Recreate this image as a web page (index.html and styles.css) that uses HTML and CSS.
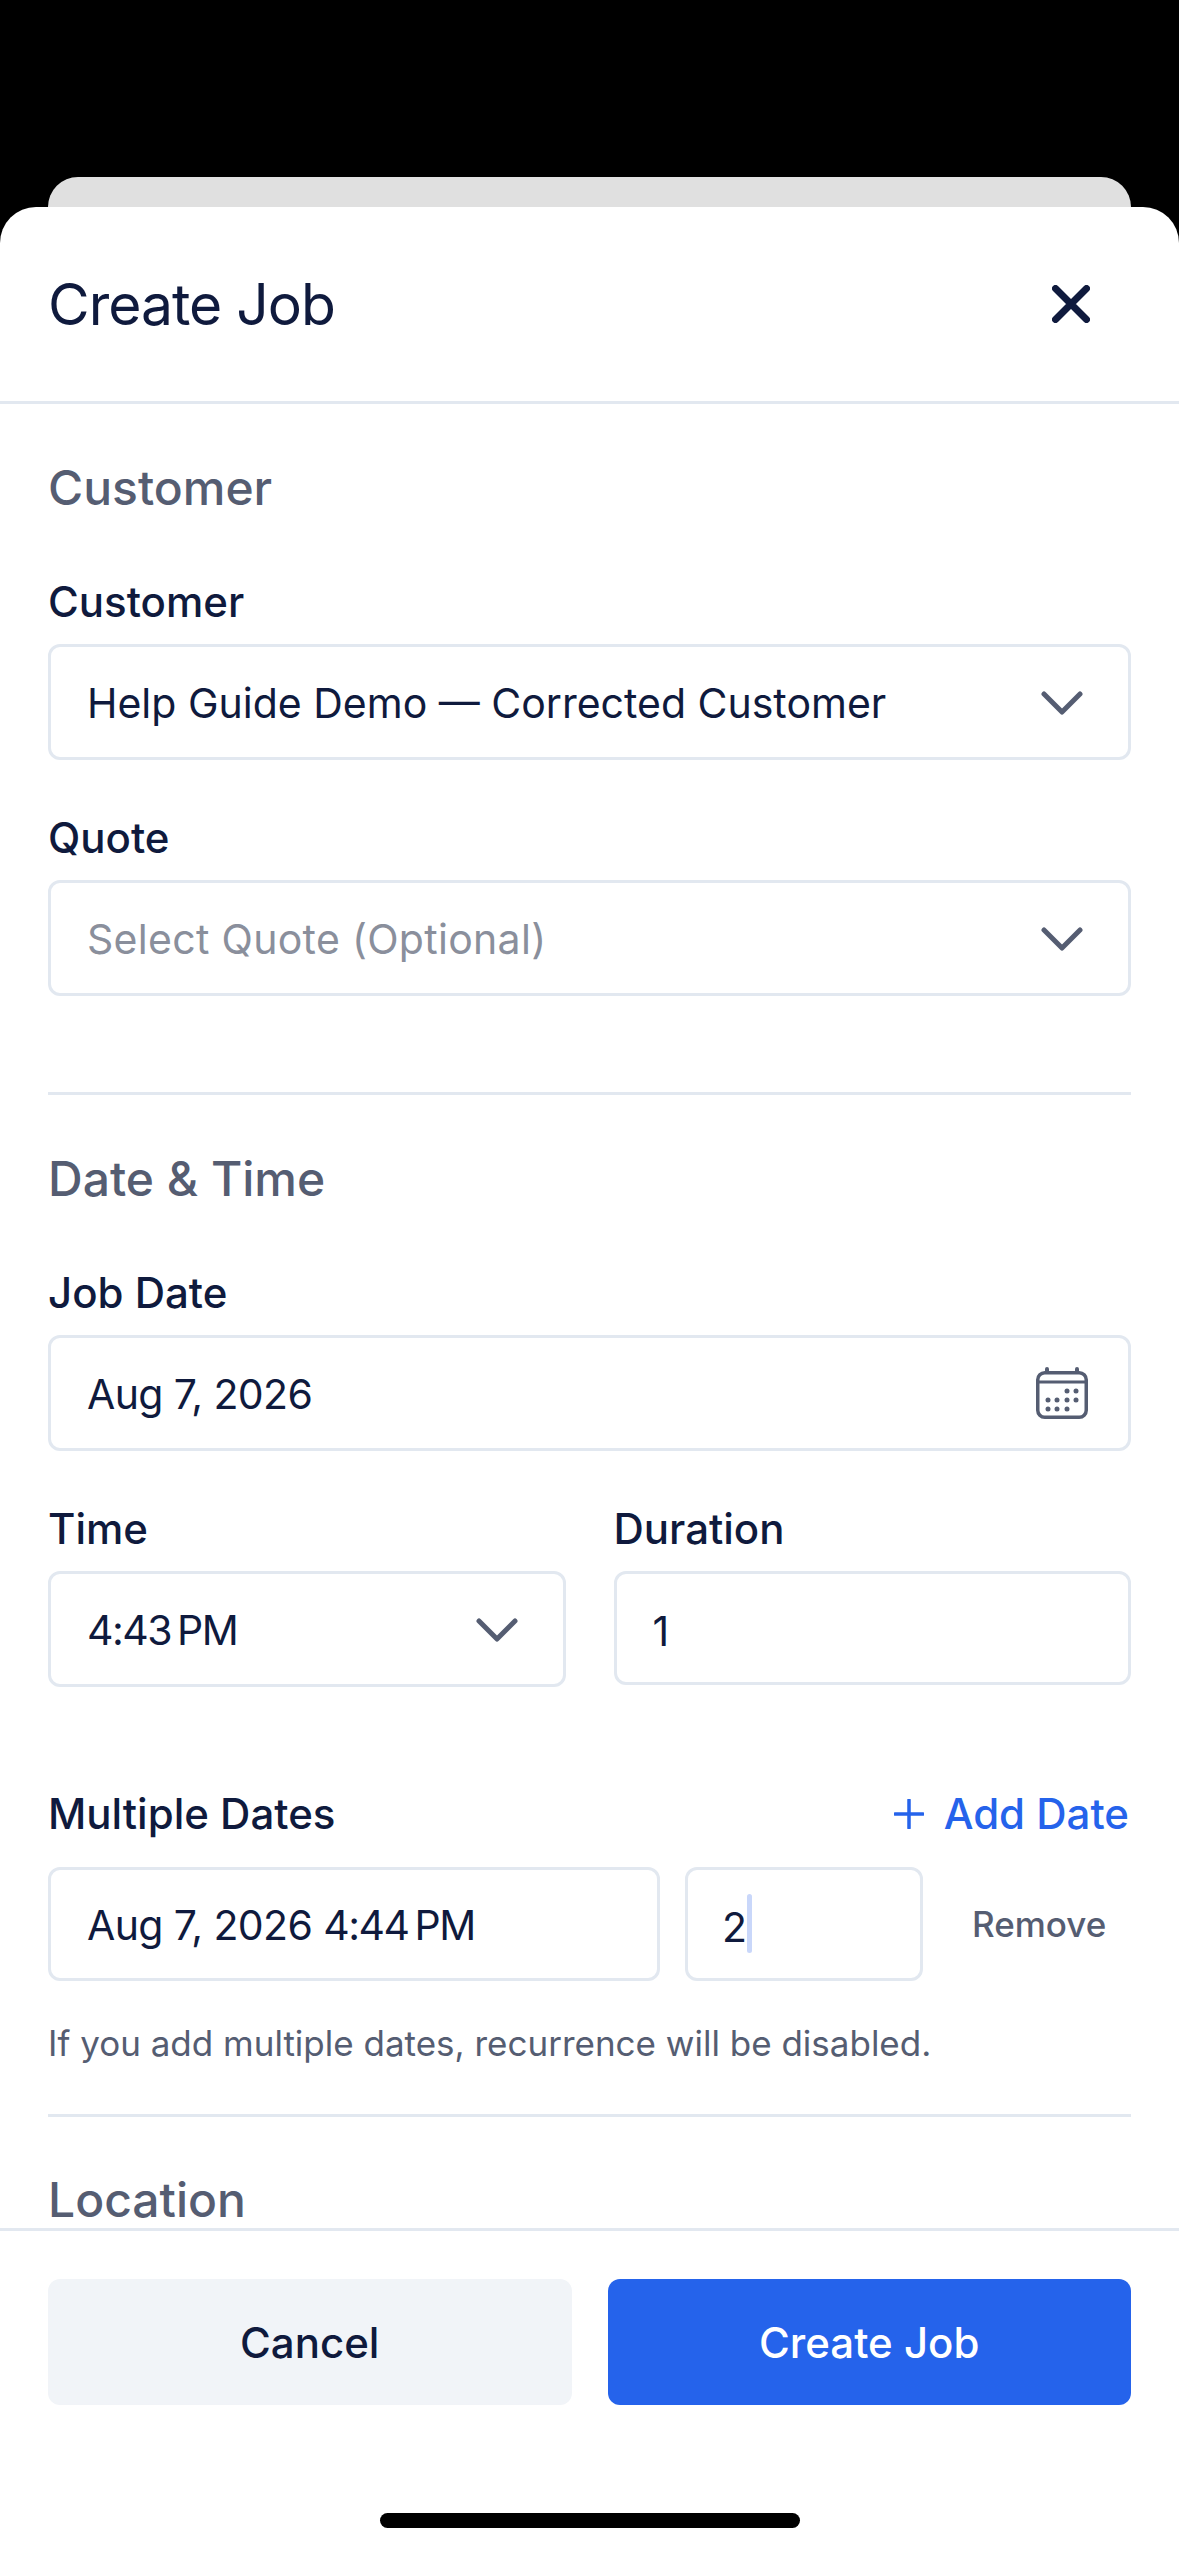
FILE: index.html
```html
<!DOCTYPE html>
<html lang="en">
<head>
    <meta charset="UTF-8">
    <meta name="viewport" content="width=device-width, initial-scale=1.0">
    <title>Create Job</title>
    <link rel="stylesheet" href="styles.css">
</head>
<body>
    <div class="back-card"></div>
    <div class="sheet">
        <div class="sheet-header">
            <h1>Create Job</h1>
            <svg class="close-icon" width="38" height="38" viewBox="0 0 38 38"><path d="M3.5 3.5L34.5 34.5M34.5 3.5L3.5 34.5" fill="none" stroke="#0f1a3d" stroke-width="7" stroke-linecap="round"/></svg>
        </div>

        <div class="sheet-body">
            <section class="section">
                <h2>Customer</h2>
                <div class="field">
                    <label>Customer</label>
                    <div class="input select">
                        <span>Help Guide Demo — Corrected Customer</span>
                        <svg class="chevron" width="42" height="24" viewBox="0 0 42 24"><path d="M3 3L21 21L39 3" fill="none" stroke="#555d72" stroke-width="5" stroke-linecap="round" stroke-linejoin="round"/></svg>
                    </div>
                </div>
                <div class="field">
                    <label>Quote</label>
                    <div class="input select">
                        <span class="placeholder">Select Quote (Optional)</span>
                        <svg class="chevron" width="42" height="24" viewBox="0 0 42 24"><path d="M3 3L21 21L39 3" fill="none" stroke="#555d72" stroke-width="5" stroke-linecap="round" stroke-linejoin="round"/></svg>
                    </div>
                </div>
            </section>

            <section class="section">
                <h2>Date &amp; Time</h2>
                <div class="field">
                    <label>Job Date</label>
                    <div class="input select">
                        <span class="date-value">Aug 7, 2026</span>
                        <svg class="calendar" width="54" height="54" viewBox="0 0 54 54">
                            <rect x="2.75" y="5.75" width="48.5" height="44.5" rx="7" fill="none" stroke="#555d72" stroke-width="3.5"/>
                            <path d="M2 15H52" stroke="#555d72" stroke-width="3"/>
                            <path d="M12 2V5M42 2V5" stroke="#555d72" stroke-width="4" stroke-linecap="round"/>
                            <g fill="#555d72">
                                <circle cx="32" cy="24" r="2.5"/><circle cx="41" cy="24" r="2.5"/>
                                <circle cx="13" cy="33" r="2.5"/><circle cx="22" cy="33" r="2.5"/><circle cx="32" cy="33" r="2.5"/><circle cx="41" cy="33" r="2.5"/>
                                <circle cx="13" cy="42" r="2.5"/><circle cx="22" cy="42" r="2.5"/><circle cx="32" cy="42" r="2.5"/>
                            </g>
                        </svg>
                    </div>
                </div>
                <div class="field-row">
                    <div class="field">
                        <label>Time</label>
                        <div class="input select">
                            <span class="time-value">4:43&#8239;PM</span>
                            <svg class="chevron" width="42" height="24" viewBox="0 0 42 24"><path d="M3 3L21 21L39 3" fill="none" stroke="#555d72" stroke-width="5" stroke-linecap="round" stroke-linejoin="round"/></svg>
                        </div>
                    </div>
                    <div class="field">
                        <label>Duration</label>
                        <div class="input number"><span>1</span></div>
                    </div>
                </div>

                <div class="dates-head">
                    <label>Multiple Dates</label>
                    <div class="add-date">
                        <svg width="30" height="30" viewBox="0 0 30 30"><path d="M15 1V29M1 15H29" stroke="#2563eb" stroke-width="3.5" stroke-linecap="round"/></svg>
                        <span>Add Date</span>
                    </div>
                </div>
                <div class="dates-row">
                    <div class="input date-input"><span class="date-value">Aug 7, 2026 <span class="time-value">4:44&#8239;PM</span></span></div>
                    <div class="input number hours-input"><span>2</span><i class="caret"></i></div>
                    <span class="remove">Remove</span>
                </div>
                <p class="hint">If you add multiple dates, recurrence will be disabled.</p>
            </section>

            <section class="section">
                <h2>Location</h2>
            </section>
        </div>

        <div class="sheet-footer">
            <div class="btn btn-cancel">Cancel</div>
            <div class="btn btn-primary">Create Job</div>
        </div>
        <div class="home-bar"><div></div></div>
    </div>
</body>
</html>
```

FILE: styles.css
```css
* {
    box-sizing: border-box;
}

html, body {
    margin: 0;
    padding: 0;
}

body {
    width: 1179px;
    height: 2556px;
    padding-top: 177px;
    background: #000;
    font-family: "Inter", "Liberation Sans", sans-serif;
    color: #0f1a3d;
    overflow: hidden;
    display: flex;
    flex-direction: column;
}

.back-card {
    height: 30px;
    flex-shrink: 0;
    margin: 0 48px;
    background: #e0e0e0;
    border-radius: 30px 30px 0 0;
}

.sheet {
    flex: 1;
    min-height: 0;
    display: flex;
    flex-direction: column;
    background: #fff;
    border-radius: 36px 36px 0 0;
}

.sheet-header {
    height: 197px;
    flex-shrink: 0;
    display: flex;
    align-items: center;
    justify-content: space-between;
    padding: 0 48px;
    border-bottom: 3px solid #e2e8f0;
}

.sheet-header h1 {
    margin: 0;
    font-size: 57px;
    font-weight: 400;
    letter-spacing: -1px;
}

.close-icon {
    margin-right: 41px;
}

.sheet-body {
    flex: 1;
    min-height: 0;
    overflow: hidden;
    padding: 0 48px;
}

.section {
    padding: 57px 0 42px;
    border-bottom: 3px solid #e2e8f0;
}

.section:last-child {
    padding: 58px 0 0;
    border-bottom: none;
}

.section:last-child h2 {
    margin: 0;
    line-height: 50px;
}

.section h2 {
    margin: 0 0 63px;
    font-size: 48px;
    line-height: 54px;
    font-weight: 500;
    color: #555d72;
}

.field {
    margin-bottom: 54px;
    flex: 1;
    min-width: 0;
}

label {
    display: block;
    font-size: 42px;
    line-height: 48px;
    font-weight: 500;
    margin-bottom: 18px;
}

.input {
    height: 114px;
    display: flex;
    align-items: center;
    justify-content: space-between;
    padding: 1px 36px 0;
    border: 3px solid #e2e8f0;
    border-radius: 12px;
    font-size: 41px;
    background: #fff;
}

.select {
    height: 116px;
}

.number {
    padding-top: 5px;
}

.date-value {
    letter-spacing: -0.6px;
}

.time-value {
    letter-spacing: -1.5px;
}

.placeholder {
    color: #8a8f9c;
    letter-spacing: 0.3px;
}

.chevron {
    margin-right: 9px;
}

.calendar {
    margin-right: 3px;
}

.field-row {
    display: flex;
    gap: 48px;
}

.dates-head {
    display: flex;
    align-items: center;
    justify-content: space-between;
    margin: 47px 0 28px;
}

.dates-head label {
    margin: 0;
}

.add-date {
    display: flex;
    align-items: center;
    gap: 20px;
    margin-right: 2px;
    font-size: 42px;
    font-weight: 500;
    color: #2563eb;
}

.dates-row {
    display: flex;
    align-items: center;
    gap: 25px;
}

.date-input {
    width: 612px;
    flex-shrink: 0;
}

.hours-input {
    width: 238px;
    flex-shrink: 0;
    justify-content: flex-start;
    padding-left: 34px;
}

.caret {
    width: 5px;
    height: 59px;
    margin-top: -6px;
    background: #c9d7fa;
    border-radius: 3px;
}

.remove {
    margin-left: 24px;
    font-size: 35px;
    font-weight: 500;
    color: #555d72;
}

.hint {
    margin: 41px 0 8px;
    font-size: 35px;
    line-height: 42px;
    color: #555d72;
}

.sheet-footer {
    height: 222px;
    flex-shrink: 0;
    display: flex;
    gap: 36px;
    padding: 48px 48px 0;
    border-top: 3px solid #e2e8f0;
}

.btn {
    flex: 1;
    height: 126px;
    display: flex;
    align-items: center;
    justify-content: center;
    border-radius: 12px;
    font-size: 42px;
    font-weight: 500;
}

.btn-cancel {
    background: #f1f4f8;
}

.btn-primary {
    background: #2563eb;
    color: #fff;
}

.home-bar {
    height: 106px;
    flex-shrink: 0;
    display: flex;
    justify-content: center;
    align-items: flex-end;
    padding-bottom: 28px;
}

.home-bar div {
    width: 420px;
    height: 15px;
    background: #000;
    border-radius: 8px;
}
```
